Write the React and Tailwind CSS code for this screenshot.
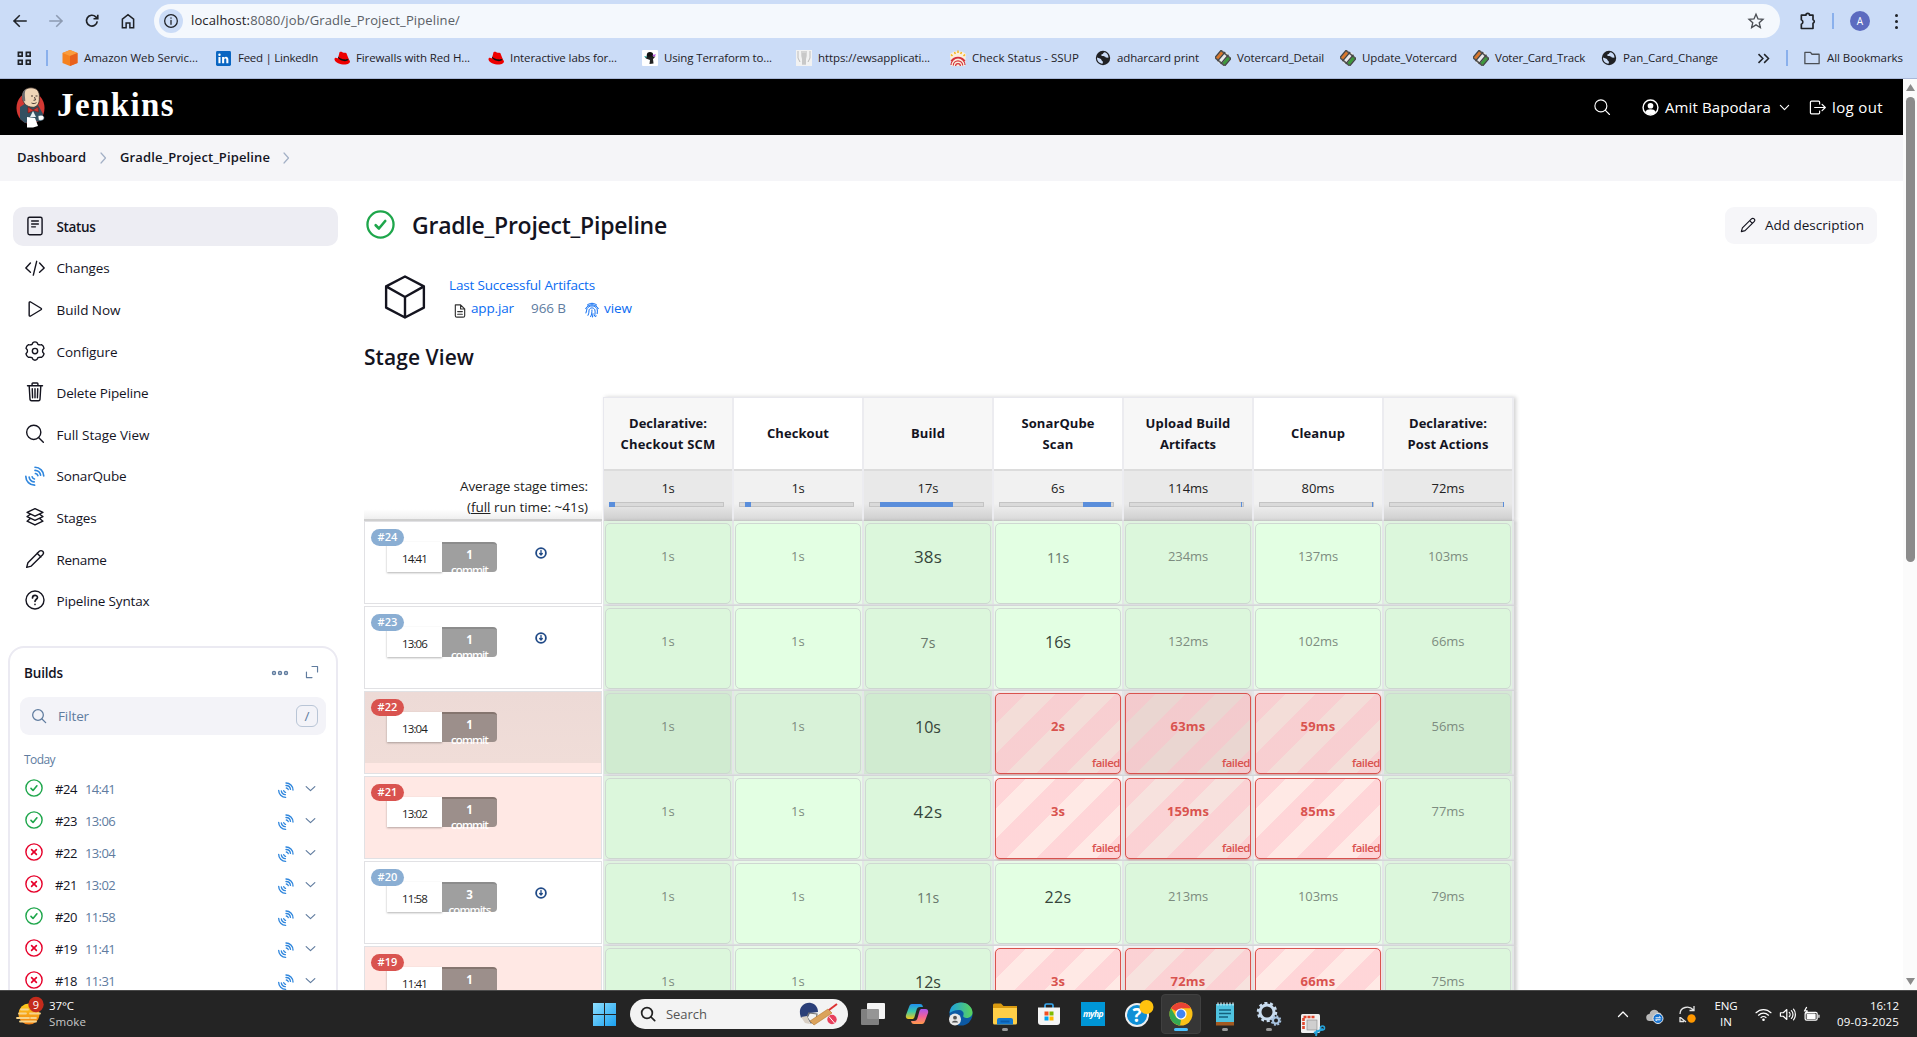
import React, { useLayoutEffect, useRef } from "react";

/* Inline text whose tracking is computed so that it fills a given width. */
function Fit({ w, className = "", children }) {
  const ref = useRef(null);
  useLayoutEffect(() => {
    const el = ref.current;
    el.style.letterSpacing = "0px";
    const natural = el.getBoundingClientRect().width;
    const n = el.textContent.length;
    el.style.letterSpacing = (w - natural) / n + "px";
  }, [w, children]);
  return (
    <span ref={ref} className={"inline-block whitespace-nowrap " + className}>
      {children}
    </span>
  );
}

function Svg({ s = 20, vb = 24, className = "", sw = 1.6, children }) {
  return (
    <svg
      width={s}
      height={s}
      viewBox={`0 0 ${vb} ${vb}`}
      fill="none"
      stroke="currentColor"
      strokeWidth={sw}
      strokeLinecap="round"
      strokeLinejoin="round"
      className={"shrink-0 " + className}
    >
      {children}
    </svg>
  );
}

const Sonar = ({ s = 20 }) => (
  <Svg s={s} sw={2} className="text-[#2f86dd]">
    <path d="M12 1.5A10.5 10.5 0 0 1 22.5 12M12 5.3A6.7 6.7 0 0 1 18.7 11M12.500 9A3.500 3.500 0 0 1 15.400 11.500" />
    <path d="M1 12.500A10.500 10.500 0 0 0 11.500 23M5 13.300A6.700 6.700 0 0 0 11 19M8.600 13A3.500 3.500 0 0 0 11.300 15.600" />
  </Svg>
);
const Search = ({ s, sw, className }) => (
  <Svg s={s} sw={sw} className={className}>
    <circle cx="10.5" cy="10.5" r="8" />
    <path d="M16.500 16.500L22 22" />
  </Svg>
);
const Pencil = ({ s, sw }) => (
  <Svg s={s} sw={sw}>
    <path d="M2 22l1.600-5.600L17.200 2.800a2.600 2.600 0 0 1 4 4L7.600 20.400 2 22zM14.500 5.500l4 4" />
  </Svg>
);
const Status = ({ ok, s }) => (
  <Svg s={s} sw={2.2} className={ok ? "text-[#1ea64b]" : "text-[#e6002a]"}>
    <circle cx="12" cy="12" r="10.8" strokeWidth={1.9} />
    {ok ? <path d="M8 12.600l2.700 2.700 5.200-6.200" /> : <path d="M8.800 8.800l6.400 6.400M15.200 8.800l-6.400 6.400" />}
  </Svg>
);

/* ---------- Browser chrome ---------- */
const Hat = () => (
  <svg width="16" height="16" viewBox="0 0 16 16" className="shrink-0">
    <path d="M1 8c-2 2 2 6 8 6.500 5 .3 7-1.500 7-3-.2-1.200-1.300-1.800-1.600-3.200L12.500 3.500C12 2.300 10.500 3 9.500 2.700 8.500 2.200 7 1 5.500 2.200L4 8.200C3 8.500 2 7.500 1 8z" fill="#e00" />
    <path d="M4 7.800c1.500 3 8 4.500 10.200 2.300l.3-1.600c-2 2-9 .5-10.200-2z" fill="#111" />
  </svg>
);
const Globe = () => (
  <svg width="16" height="16" viewBox="0 0 16 16" className="shrink-0">
    <circle cx="8" cy="8" r="7.200" fill="#202124" />
    <path d="M9.500 2.200c-1.500.3-1 1.800-2.500 2-1.200.2-.8 1.600.2 1.700 2 .1 3 .4 3.600 1.600l2.600.2c.4-2.500-1.500-4.900-3.900-5.500zM2 7.500c2 .8 4 1 4.500 2.400.4 1.300 1.500 1 1.500 2.200l-.5 1.700C4 13.500 1.800 10.500 2 7.500z" fill="#cbdcf7" />
  </svg>
);
const Voter = () => (
  <svg width="16" height="16" viewBox="0 0 16 16" className="shrink-0">
    <g transform="rotate(40 8 8)">
      <rect x="2" y="3" width="3.400" height="10" fill="#d9772c" />
      <rect x="6.300" y="1.500" width="3.400" height="13" fill="#e8e8e8" />
      <rect x="10.600" y="3" width="3.400" height="10" fill="#3e9a3c" />
      <path d="M1.500 3.500h13M2 13h12" stroke="#555" strokeWidth="1.600" />
      <path d="M1.600 3v10M5.800 2v12M10.100 2v12M14.400 3v10" stroke="#444" strokeWidth="1.300" />
    </g>
  </svg>
);
const Aws = () => (
  <svg width="16" height="16" viewBox="0 0 16 16" className="shrink-0">
    <path d="M8 0l7.500 3v10L8 16 .5 13V3z" fill="#f58220" />
    <path d="M8 0l7.500 3L8 6 .5 3z" fill="#fa9c3c" />
    <path d="M8 6l7.500-3v10L8 16z" fill="#e8601c" />
  </svg>
);
const LinkedIn = () => (
  <svg width="15" height="15" viewBox="0 0 16 16" className="shrink-0">
    <rect width="16" height="16" rx="1.500" fill="#0a66c2" />
    <path d="M2.600 6.300h2.200V13H2.600zM6.500 6.300h2.100v1c1.300-1.900 4.600-1.500 4.600 1.700v4h-2.200V9.500c0-2-2.300-1.700-2.300 0V13H6.500z" fill="#fff" />
    <circle cx="3.700" cy="3.900" r="1.300" fill="#fff" />
  </svg>
);
const Terra = () => (
  <svg width="16" height="16" viewBox="0 0 16 16" className="shrink-0">
    <rect width="16" height="16" rx="1" fill="#fff" />
    <circle cx="8" cy="5.300" r="3.200" fill="#111" />
    <path d="M2.500 6.500h11L11 9l.5 4.500-4 .5.500-4L4 8.500z" fill="#222" />
    <path d="M10 5l4-.7-1.500 2.500z" fill="#b44be0" />
    <path d="M2 6l3 .5-1 1.500z" fill="#42c8c0" />
  </svg>
);
const Emblem = () => (
  <svg width="16" height="16" viewBox="0 0 16 16" className="shrink-0">
    <rect width="16" height="16" fill="#f2f2f2" />
    <path d="M5 1h6v5l-1 3v6H6V9L5 6z" fill="#d4d4d4" />
    <path d="M2 1v7l2 4M14 1v7l-2 4M7 3v11M9 3v11" stroke="#bcbcbc" fill="none" />
  </svg>
);
const Aadhaar = () => (
  <svg width="16" height="16" viewBox="0 0 16 16" className="shrink-0" fill="none">
    <path d="M0 4l1 12h14l1-12-3-2-5-1-5 1z" fill="#fbeedd" />
    <path d="M1 15a7 7 0 0 1 14 0M3.300 15.500a4.700 4.700 0 0 1 9.400 0M5.600 16a2.400 2.400 0 0 1 4.800 0M1 11a8.500 8.500 0 0 1 14 0" stroke="#d3323c" strokeWidth="1.200" />
    <path d="M1 4.500l1.500 1.500M4.500 2l.8 2M8 .5V3M11.500 2l-.8 2M15 4.500L13.500 6" stroke="#f3b61f" strokeWidth="1.500" />
  </svg>
);

const bookmarks = [
  [Aws, "Amazon Web Servic...", 114, "w-[154px]"],
  [LinkedIn, "Feed | LinkedIn", 80, "w-[118px]"],
  [Hat, "Firewalls with Red H...", 114, "w-[154px]"],
  [Hat, "Interactive labs for...", 107, "w-[154px]"],
  [Terra, "Using Terraform to...", 108, "w-[154px]"],
  [Emblem, "https://ewsapplicati...", 112, "w-[154px]"],
  [Aadhaar, "Check Status - SSUP", 107, "w-[145px]"],
  [Globe, "adharcard print", 82, "w-[120px]"],
  [Voter, "Votercard_Detail", 87, "w-[125px]"],
  [Voter, "Update_Votercard", 95, "w-[133px]"],
  [Voter, "Voter_Card_Track", 90, "w-[128px]"],
  [Globe, "Pan_Card_Change", 95, "w-[154px]"],
];

function Browser() {
  return (
    <div className="flex h-[79px] flex-col border-b border-[#a9b8d8] bg-[#cbdcf7] text-[#1f2227]">
      <div className="flex h-[42px] items-center pl-[11px]">
        <Svg s={18} sw={2} className="mr-[18px]"><path d="M20 12H4M11 5l-7 7 7 7" strokeLinecap="square" strokeLinejoin="miter" /></Svg>
        <Svg s={18} sw={2} className="mr-[18px] text-[#8d9bb2]"><path d="M4 12h16M13 5l7 7-7 7" strokeLinecap="square" strokeLinejoin="miter" /></Svg>
        <Svg s={18} sw={2.200} className="mr-[18px]"><path d="M19 12.500a7.200 7.200 0 1 1-2-6L19.500 9M19.700 3.500V9H14" strokeLinecap="butt" strokeLinejoin="miter" /></Svg>
        <Svg s={18} sw={2} className="mr-[17px]"><path d="M4.500 21V9.500L12 3.500l7.500 6V21h-5v-6.500h-5V21z" strokeLinejoin="miter" /></Svg>
        <div className="flex h-[34px] w-[1626px] items-center rounded-full bg-[#f4f8fd] pl-[5px] pr-[15px]">
          <div className="flex size-6 items-center justify-center rounded-full bg-[#cbdcf7]">
            <Svg s={16} sw={1.900}><circle cx="12" cy="12" r="9.500" /><path d="M12 11v6M12 7.300v.4" /></Svg>
          </div>
          <div className="ml-[8px] text-[13px] text-[#5a5f66]">
            <Fit w={269}><span className="text-[#1f2227]">localhost:</span>8080/job/Gradle_Project_Pipeline/</Fit>
          </div>
          <Svg s={18} sw={1.800} className="ml-auto text-[#4b4f55]"><path d="M12 3l2.700 6.200 6.600.6-5 4.400 1.500 6.500L12 17.200l-5.800 3.500 1.500-6.500-5-4.400 6.600-.6z" strokeLinejoin="miter" /></Svg>
        </div>
        <Svg s={20} sw={2} className="ml-[18px]"><path d="M4 5h5.500a2.200 2.200 0 0 1 4.400 0H18v5.500a2.200 2.200 0 0 1 0 4.200V21H4v-5a3 3 0 0 0 0-5.500z" /></Svg>
        <div className="ml-[14px] h-4 w-[2px] bg-[#8ab0ec]" />
        <div className="ml-[16px] flex size-5 items-center justify-center rounded-full bg-[#5c6bc0] text-[10px] text-white">A</div>
        <div className="ml-[25px] flex flex-col gap-[3px]">
          <i className="size-[3px] rounded-full bg-[#1f2227]" />
          <i className="size-[3px] rounded-full bg-[#1f2227]" />
          <i className="size-[3px] rounded-full bg-[#1f2227]" />
        </div>
      </div>
      <div className="flex h-8 items-center pl-[17px] text-[11.500px]">
        <Svg s={15} vb={16} sw={1.800} className="mr-[14px]"><path d="M1.500 1.500h4v4h-4zM10 1.500h4v4h-4zM1.500 10h4v4h-4zM10 10h4v4h-4z" strokeLinejoin="miter" /></Svg>
        <div className="mr-[14px] h-4 w-[2px] bg-[#8ab0ec]" />
        {bookmarks.map(([Icon, label, w, cw]) => (
          <div key={label} className={"flex shrink-0 items-center gap-[6px] " + cw}>
            <div className="w-4"><Icon /></div>
            <Fit w={w}>{label}</Fit>
          </div>
        ))}
        <Svg s={15} sw={2.400} className="ml-px"><path d="M4 5l7 7-7 7M13 5l7 7-7 7" strokeLinecap="butt" strokeLinejoin="miter" /></Svg>
        <div className="ml-[15px] h-4 w-[2px] bg-[#8ab0ec]" />
        <Svg s={18} sw={1.700} className="ml-[15px] mr-[6px] text-[#4b4f55]"><path d="M2.500 4.500H10l2 2.500h9.500v12.500h-19z" /></Svg>
        <Fit w={76}>All Bookmarks</Fit>
      </div>
    </div>
  );
}

/* ---------- Jenkins ---------- */
const Butler = () => (
  <svg width="30" height="41" viewBox="0 0 30 41" className="shrink-0">
    <ellipse cx="14.500" cy="21" rx="14" ry="16" fill="#d33833" />
    <path d="M4 20l6-4 12 2 5 9-2 7-16 2-5-4z" fill="#335061" />
    <path d="M6.500 11C6 5 9 .8 15 .8c6 0 9 4 8.300 10 .3 5-1.500 9-6 9.500C10 20 7 16 6.500 11z" fill="#f0d6b7" stroke="#3b2f2a" strokeWidth=".8" />
    <path d="M6.300 12c-1-5 1-9 4-10.300-2 3-1.500 6-1.300 8.500l.3 4c-1.500.3-2.500-.2-3-2.200z" fill="#6d6b6d" />
    <path d="M15 9h2M19.500 9h2M18.500 10l1 3-2 .3M15.500 16c2 1 3.500.6 5-.4" stroke="#3b2f2a" strokeWidth=".9" fill="none" />
    <path d="M12 20l5 3 5-3 .5 5-5-1.500L12 26z" fill="#d33833" stroke="#7c1715" strokeWidth=".6" />
    <path d="M17 24l-3 6h6z" fill="#e8eef2" />
    <path d="M11 30l8 1 3 8-5 1.500h-6z" fill="#fff" />
    <path d="M22 29c3-1.500 5.500-1 6 1.500s-3 3.500-5.500 2.500z" fill="#fff" stroke="#335061" strokeWidth=".6" />
  </svg>
);

function Header() {
  return (
    <div className="flex h-14 items-center bg-black pl-4 pr-5 text-white">
      <Butler />
      <div className="ml-[11px] -mt-1 font-['Liberation_Serif',serif] text-[33px] leading-none font-bold">
        <Fit w={118}>Jenkins</Fit>
      </div>
      <Search s={18} sw={1.500} className="ml-auto mr-[31px]" />
      <svg width="17" height="17" viewBox="0 0 24 24" className="mr-[6px]">
        <circle cx="12" cy="12" r="10.500" fill="none" stroke="#fff" strokeWidth="2" />
        <circle cx="12" cy="9.500" r="4" fill="#fff" />
        <path d="M4.500 18.500c1.500-3 4-4 7.500-4s6 1 7.500 4C17.500 21 15 22 12 22s-5.500-1-7.500-3.500z" fill="#fff" />
      </svg>
      <div className="text-[15px] font-medium"><Fit w={106}>Amit Bapodara</Fit></div>
      <Svg s={11} sw={2.600} className="ml-[8px] mr-[19px]"><path d="M3 7.500l9 9 9-9" /></Svg>
      <Svg s={17} sw={1.700} className="mr-[6px]"><path d="M15 7V4.500A1.500 1.500 0 0 0 13.500 3h-10A1.500 1.500 0 0 0 2 4.500v15A1.500 1.500 0 0 0 3.500 21h10a1.500 1.500 0 0 0 1.500-1.500V17M8 12h14.500M18.500 7.500L23 12l-4.500 4.500" /></Svg>
      <div className="text-[15px] font-medium"><Fit w={51}>log out</Fit></div>
    </div>
  );
}

const Crumb = () => (
  <Svg s={12} sw={2.400} className="text-[#a3b0c6]"><path d="M8 2l9 10-9 10" /></Svg>
);

const tasks = [
  ["Status", 39, <g key="a"><rect x="3.500" y="1.500" width="17" height="21" rx="2" /><path d="M8 6h8M8 9.500h8M8 13h4.500" /></g>],
  ["Changes", 53, <path key="b" d="M6.500 6L1 12l5.500 5M17.500 6L23 12l-5.500 5M14 4l-4 16.500" />],
  ["Build Now", 64, <path key="c" d="M5 4.500v15c0 1 1 1.300 1.800.9l12.400-7.500c.8-.5.8-1.300 0-1.800L6.800 3.600C6 3.200 5 3.500 5 4.500z" />],
  ["Configure", 61, <g key="d"><path d="M12 1c2 0 3 .7 3.500 3 1.800.9 2.300 1 4.300.4 2 1 2.800 2.600 3 4.300-1.600 1.600-2 2.200-1.800 3.300-.2 1.200.2 1.800 1.800 3.400-.3 1.800-1.200 3.300-3 4.200-2-.5-2.500-.4-4.300.4-.6 2.200-1.500 3-3.500 3s-3-.8-3.500-3c-1.800-.8-2.300-.9-4.300-.4-1.800-.9-2.700-2.400-3-4.200C2.800 13.800 3.200 13.200 3 12c.2-1.100-.2-1.700-1.800-3.300.2-1.700 1-3.300 3-4.300 2 .6 2.500.5 4.300-.4C9 1.700 10 1 12 1z" /><circle cx="12" cy="12" r="3.200" /></g>],
  ["Delete Pipeline", 92, <path key="e" d="M3 4.500h18M8.500 4.500V2.200c0-.6.400-1 1-1h5c.6 0 1 .4 1 1v2.300M5 4.500l1 16.300c.1 1 .8 1.700 1.800 1.700h8.400c1 0 1.700-.7 1.800-1.700l1-16.300M8.700 8l.4 11M12 8v11M15.300 8l-.4 11" />],
  ["Full Stage View", 93, <g key="f"><circle cx="10.500" cy="10" r="8.500" /><path d="M16.500 16.500L22 22" /></g>],
  ["SonarQube", 70, null],
  ["Stages", 40, <path key="g" d="M12 2l9.500 4.500L12 11 2.500 6.500zM6 9l-3.500 2.500L12 16l9.500-4.500L18 9M6 14l-3.500 3L12 21.500l9.500-4.500-3.500-3" />],
  ["Rename", 50, <path key="h" d="M2 22l1.500-5.500L17.200 2.800a2.600 2.600 0 0 1 4 4L7.500 20.500 2 22zM14.500 5l4.500 4.500" />],
  ["Pipeline Syntax", 93, <g key="i"><circle cx="12" cy="12" r="10.800" /><path d="M9 9.500c0-4 6-3.800 6-.5 0 2-3 2.300-3 4.800M12 17.300v.2" strokeWidth="2" /></g>],
];

const builds = [
  [24, "14:41", true], [23, "13:06", true], [22, "13:04", false], [21, "13:02", false],
  [20, "11:58", true], [19, "11:41", false], [18, "11:31", false],
];

function Sidebar() {
  return (
    <div className="flex w-[364px] shrink-0 flex-col pt-[26px] text-[13.500px] text-[#14141f]">
      <div className="flex flex-col gap-[2.600px] pl-[13px]">
        {tasks.map(([label, w, icon], i) => (
          <div key={label} className={"flex h-[39px] w-[325px] shrink-0 items-center gap-[11.500px] rounded-[10px] pl-[12px] " + (i === 0 ? "bg-[#ededf3] font-semibold" : "")}>
            {icon ? <Svg s={20} sw={1.700} className="-mt-px">{icon}</Svg> : <Sonar s={20} />}
            <Fit w={w} className="mt-px">{label}</Fit>
          </div>
        ))}
      </div>
      <div className="ml-2 mt-[26px] flex h-[460px] w-[330px] shrink-0 flex-col rounded-[16px] border-2 border-[#ebeaf2] px-[10px]">
        <div className="flex h-[49px] items-center pl-[4px] pr-[7px]">
          <Fit w={39} className="font-semibold">Builds</Fit>
          <Svg s={18} sw={1.900} className="ml-auto mr-[16px] text-[#607c9f]"><circle cx="4" cy="12" r="2" /><circle cx="12" cy="12" r="2" /><circle cx="20" cy="12" r="2" /></Svg>
          <Svg s={14} sw={2} className="mb-px text-[#607c9f]"><path d="M12 2.500h9.500V12M2.500 12v9.500H12" /></Svg>
        </div>
        <div className="flex h-[38px] items-center rounded-[9px] bg-[#f3f3f8] pl-[11px] pr-2 text-[#607c9f]">
          <Search s={16} sw={1.900} />
          <Fit w={31} className="ml-[11px]">Filter</Fit>
          <div className="ml-auto flex size-[22px] items-center justify-center rounded-[6px] border border-[#b9c5d6]">/</div>
        </div>
        <div className="mt-[16px] h-[21px] pl-1 text-[12px] text-[#607c9f]"><Fit w={31}>Today</Fit></div>
        {builds.map(([n, t, ok]) => (
          <div key={n} className="flex h-8 shrink-0 items-center pl-[5px] pr-[9px]">
            <Status ok={ok} s={18} />
            <Fit w={22} className="ml-[12px] mt-[3px] text-[13px]">#{n}</Fit>
            <Fit w={30} className="ml-2 mt-[3px] text-[13px] text-[#607c9f]">{t}</Fit>
            <span className="ml-auto mr-[10px] mt-[3px]"><Sonar s={16} /></span>
            <Svg s={13} sw={2.200} className="text-[#607c9f]"><path d="M4 8.500l8 7.500 8-7.500" /></Svg>
          </div>
        ))}
      </div>
    </div>
  );
}

const stages = [
  { n: ["Declarative:", "Checkout SCM"], w: [78, 95], t: "1s", tw: 13, l: 0, b: 6 },
  { n: ["Checkout"], w: [62], t: "1s", tw: 13, l: 6, b: 6 },
  { n: ["Build"], w: [34], t: "17s", tw: 21, l: 11, b: 73 },
  { n: ["SonarQube", "Scan"], w: [73, 31], t: "6s", tw: 14, l: 84, b: 28 },
  { n: ["Upload Build", "Artifacts"], w: [85, 56], t: "114ms", tw: 40, l: 112, b: 1.5 },
  { n: ["Cleanup"], w: [54], t: "80ms", tw: 33, l: 113, b: 1.5 },
  { n: ["Declarative:", "Post Actions"], w: [78, 81], t: "72ms", tw: 33, l: 114, b: 1.5 },
];

/* Each run: number, time, commits, ok, then one duration per stage. */
const runs = [
  { n: 24, t: "14:41", c: 1, ok: true, d: ["1s", "1s", "38s", "11s", "234ms", "137ms", "103ms"] },
  { n: 23, t: "13:06", c: 1, ok: true, d: ["1s", "1s", "7s", "16s", "132ms", "102ms", "66ms"] },
  { n: 22, t: "13:04", c: 1, ok: false, hover: true, d: ["1s", "1s", "10s", "2s", "63ms", "59ms", "56ms"] },
  { n: 21, t: "13:02", c: 1, ok: false, d: ["1s", "1s", "42s", "3s", "159ms", "85ms", "77ms"] },
  { n: 20, t: "11:58", c: 3, ok: true, d: ["1s", "1s", "11s", "22s", "213ms", "103ms", "79ms"] },
  { n: 19, t: "11:41", c: 1, ok: false, d: ["1s", "1s", "12s", "3s", "72ms", "66ms", "75ms"] },
];

const big = {
  "38s": [17, 28], "16s": [16, 26], "42s": [17, 29], "22s": [16, 27], "10s": [16, 26], "12s": [16, 26],
  "11s": [14, 22], "7s": [14, 15],
};

function Cell({ v, i, failed, hover }) {
  const odd = i % 2 === 0;
  const [fs, fw] = big[v] || [13, v.length === 2 ? 14 : v.length === 5 ? 40 : 33];
  let bg = odd ? "bg-[#dcf7dc]" : "bg-[#e3ffe3]";
  let outer = odd ? "bg-[#e0f3e0]" : "bg-[#e8fae8]";
  if (hover) {
    bg = odd ? "bg-[#d0ebd0]" : "bg-[#d8f2d8]";
    outer = odd ? "bg-[#d5e8d5]" : "bg-[#dff0df]";
  }
  if (failed) {
    outer = odd ? "bg-[#f1f1f1]" : "bg-[#fbf9f9]";
    bg = odd ? "bg-[#f7e2de]" : "bg-[#ffe9e5]";
    if (hover) {
      outer = odd ? "bg-[#e6e2e2]" : "bg-[#f1eeee]";
      bg = odd ? "bg-[#ead6d1]" : "bg-[#f3ddd8]";
    }
  }
  const stripes = failed
    ? " bg-[linear-gradient(135deg,rgba(255,190,200,0.45)_25%,transparent_25%,transparent_50%,rgba(255,190,200,0.45)_50%,rgba(255,190,200,0.45)_75%,transparent_75%,transparent)] bg-[length:60px_60px] border-[#d9534f] shadow-[0_1px_2px_rgba(217,83,79,0.5)]"
    : " border-[#cfd8d2]";
  const tone = failed
    ? "font-bold text-[#d9534f]"
    : fs >= 16 ? "text-[#36453a]" : fs === 14 ? "text-[#69786c]" : "text-[#7d8c80]";
  return (
    <div className={"flex w-[130px] shrink-0 border-b-2 border-r-2 border-[#e4e6e8] px-px pt-[2px] " + outer}>
      <div className={"flex h-[81px] w-full flex-col rounded-[5px] border " + bg + stripes}>
        <div className={"flex h-[66px] items-center justify-center " + tone}>
          <span style={{ fontSize: failed ? 13 : fs }}><Fit w={failed && v.length > 3 ? fw + 2 : fw}>{v}</Fit></span>
        </div>
        {failed && (
          <div className="-mt-[5px] text-right text-[11.500px] leading-4 font-semibold text-[#d9534f]">
            <Fit w={28}>failed</Fit>
          </div>
        )}
      </div>
    </div>
  );
}

function RunHead({ r }) {
  const bad = !r.ok;
  const fill = !bad
    ? "bg-white"
    : r.hover
      ? "bg-[linear-gradient(#eddad6_0,#f0ddd8_71px,#ffe8e4_71px)]"
      : "bg-[#ffe8e4]";
  return (
    <div className={"mb-[2px] mr-px flex h-[83px] w-[238px] shrink-0 border border-[#e1e1e4] " + fill}>
      <div className="relative ml-[22px] mt-[20px] flex h-[30px] w-[110px]">
        <div className="flex h-[30px] w-[55px] items-center justify-center bg-white pt-[4px] text-[11.500px] text-[#222] shadow-[0_1px_2px_rgba(0,0,0,0.3)]">
          <Fit w={25}>{r.t}</Fit>
        </div>
        <div className={"flex h-[30px] w-[55px] flex-col items-center rounded-r-[4px] border-t-2 pt-[2px] text-[11.500px] leading-[17px] text-white " + (bad ? "border-[#85756f] bg-[#9c8f8b]" : "overflow-hidden border-[#8c8c8c] bg-[#9f9f9f]")}>
          <b>{r.c}</b>
          <Fit w={r.c > 1 ? 42 : 37} className="-mt-[2px] font-semibold">{r.c > 1 ? "commits" : "commit"}</Fit>
        </div>
        <div className={"absolute -left-4 -top-[13px] flex h-[17px] w-[33px] items-center justify-center rounded-full text-[11px] font-semibold text-white " + (bad ? "bg-[#d9534f]" : "bg-[#8aaed3]")}>
          <Fit w={20}>#{r.n}</Fit>
        </div>
      </div>
      {r.ok && (
        <Svg s={12} vb={12} sw={1.800} className="ml-[38px] mt-[25px] text-[#204a87]">
          <circle cx="6" cy="6" r="4.900" />
          <path d="M6 3.500v4.500M4.700 6.500L6 8l1.300-1.500" strokeWidth="1.300" />
        </Svg>
      )}
    </div>
  );
}

function StageTable() {
  return (
    <div className="mt-[31px] flex w-[1152px] shrink-0 flex-col">
      <div className="flex h-[124px] shrink-0">
        <div className="mr-px flex w-[238px] flex-col items-end justify-end border-b-2 border-[#cfcfcf] bg-[linear-gradient(transparent_92%,#efefef)] pb-px pr-[14px] text-[13.500px] leading-[21px] text-[#222]">
          <Fit w={128}>Average stage times:</Fit>
          <Fit w={121}>(<u>full</u> run time: ~41s)</Fit>
        </div>
        <div className="flex border-l border-t border-[#e8e8ee] shadow-[2px_0_4px_rgba(0,0,0,0.18)]">
          {stages.map((s, i) => (
            <div key={i} className={"flex w-[130px] flex-col border-r-2 border-[#ececf0] " + (i % 2 ? "bg-white" : "bg-[#f7f7f7]")}>
              <div className="flex h-[71px] flex-col items-center justify-center text-[13px] leading-[21px] font-bold text-[#14141f]">
                {s.n.map((x, k) => <Fit key={x} w={s.w[k]}>{x}</Fit>)}
              </div>
              <div className={"flex flex-1 flex-col items-center border-t-2 border-[#dcdcdc] pt-[7px] text-[13px] leading-[21px] text-[#222] " + (i % 2 ? "bg-[linear-gradient(#f1f1f1_65%,#d8d8d8)]" : "bg-[linear-gradient(#e9e9e9_65%,#cdcdcd)]")}>
                <Fit w={s.tw}>{s.t}</Fit>
                <div className="mr-[4px] mt-[3px] flex h-[5px] w-[115px] shrink-0 border border-[#c4c4c4] bg-[#dadada]">
                  <div className="-my-px h-[5px] shrink-0 bg-[#5a8edb]" style={{ marginLeft: s.l - 1, width: s.b }} />
                </div>
              </div>
            </div>
          ))}
        </div>
      </div>
      {runs.map((r) => (
        <div key={r.n} className="flex h-[85px] shrink-0">
          <RunHead r={r} />
          <div className="flex border-l border-[#e4e6e8] shadow-[3px_0_3px_rgba(0,0,0,0.18)]">
            {r.d.map((v, i) => (
              <Cell key={i} v={v} i={i} hover={r.hover} failed={!r.ok && i > 2 && i < 6} />
            ))}
          </div>
        </div>
      ))}
    </div>
  );
}

function Main() {
  return (
    <div className="flex flex-1 flex-col text-[#14141f]">
      <div className="flex h-[88px] shrink-0 items-center pr-[26px]">
        <span className="-mt-[2px] ml-[2px]"><Status ok s={29} /></span>
        <Fit w={255} className="ml-[17px] text-[23px] font-semibold">Gradle_Project_Pipeline</Fit>
        <div className="ml-auto flex h-[37px] w-[152px] items-center gap-[9px] rounded-[9px] bg-[#f6f6f9] pl-[15px] text-[13.500px]">
          <Pencil s={16} sw={1.700} />
          <Fit w={99}>Add description</Fit>
        </div>
      </div>
      <div className="flex h-[56px] shrink-0 items-center pl-[19px]">
        <Svg s={44} sw={1.300} className="mr-[22px]"><path d="M12 .8l10.300 5.400v11.600L12 23.200 1.700 17.800V6.200zM1.700 6.200L12 12l10.300-5.800M12 12v11.200" /></Svg>
        <div className="flex flex-col items-start text-[13.500px] text-[#0b6cf2]">
          <Fit w={146} className="leading-[23px]">Last Successful Artifacts</Fit>
          <div className="flex h-[23px] items-center">
            <Svg s={14} sw={2} className="ml-1 mr-1 mt-[5px] text-[#333]"><path d="M4 1.500h9l7 7V20a2.500 2.500 0 0 1-2.500 2.500h-11A2.500 2.500 0 0 1 4 20zM13 1.500v7h7M8 13h8M8 17.500h8" /></Svg>
            <Fit w={43}>app.jar</Fit>
            <Fit w={35} className="ml-[17px] text-[#607c9f]">966 B</Fit>
            <Svg s={16} sw={1.500} className="ml-[18px] mr-[4px] mt-[2px]">
              <path d="M5 4.500c4-3.500 10-3.500 14 0M2.500 10c3-8 16-8 19 0M3 16.500c1-2 .5-4.500 1.500-6.500 3-5.500 12-5.500 15 0 .8 2 .8 5 .3 7.500M6 20c2-3.500 1-6 1.800-8.500 1.700-3.500 6.700-3.500 8.400 0 .8 3 .6 6.500-.5 9.500M10 22c2-4 1.800-7 1.900-10M13.500 17.500l-.7 5M18 20.500l-.5 1.500" />
            </Svg>
            <Fit w={28}>view</Fit>
          </div>
        </div>
      </div>
      <div className="mt-[25px] flex h-4 shrink-0 items-center text-[21px] font-semibold"><Fit w={110}>Stage View</Fit></div>
      <StageTable />
    </div>
  );
}

/* ---------- Taskbar ---------- */
const Slot = ({ children, active, dot }) => (
  <div className={"flex h-[40px] w-[40px] shrink-0 flex-col items-center justify-center rounded-[4px] " + (active ? "border border-[#404040] bg-[#363636]" : "")}>
    <div className="mt-[3px] flex h-[28px] items-center">{children}</div>
    <div className={"h-[3px] rounded-full " + (active ? "w-[14px] bg-[#4cc2ff]" : dot ? "w-[6px] bg-[#9a9a9a]" : "w-0")} />
  </div>
);

function Taskbar() {
  return (
    <div className="flex h-[47px] items-center border-t border-[#4a4a4a] bg-[#242424] text-[11.500px] leading-[16px] text-white">
      <div className="flex w-[593px] items-center pl-[16px]">
        <svg width="28" height="30" viewBox="0 0 28 30" className="-mt-[6px] mr-[5px]">
          <defs><linearGradient id="sun" x1="0" y1="0" x2="0" y2="1"><stop offset="0" stopColor="#ffcf1b" /><stop offset="1" stopColor="#f07c12" /></linearGradient></defs>
          <circle cx="13" cy="18" r="10.500" fill="url(#sun)" />
          <path d="M5 13.500h7M14 17.500h10M3 17.500h7M1 22h12M15 22h5M4 25.500h16" stroke="#f6d48c" strokeWidth="1.800" strokeLinecap="round" />
          <circle cx="20" cy="8.500" r="7.700" fill="#c42b1c" />
          <text x="20" y="12.500" textAnchor="middle" fontSize="11" fill="#fff" stroke="none">9</text>
        </svg>
        <div className="flex flex-col items-start">
          <Fit w={25}>37°C</Fit>
          <Fit w={37} className="text-[#c8c8c8]">Smoke</Fit>
        </div>
      </div>
      <svg width="23" height="23" viewBox="0 0 23 23">
        <defs><linearGradient id="win" x1="0" y1="0" x2="1" y2="1"><stop offset="0" stopColor="#8fe0ff" /><stop offset="1" stopColor="#1aa0f0" /></linearGradient></defs>
        <path d="M0 0h11v11H0zM12 0h11v11H12zM0 12h11v11H0zM12 12h11v11H12z" fill="url(#win)" />
      </svg>
      <div className="ml-[14px] flex h-[30px] w-[218px] items-center rounded-full bg-[#f3f3f3] pl-[10px] pr-[9px] text-[#555]">
        <Search s={16} sw={2.600} className="text-[#222]" />
        <Fit w={41} className="ml-[10px] text-[13px]">Search</Fit>
        <svg width="40" height="24" viewBox="0 0 40 24" className="ml-auto">
          <path d="M1 12C0 4 6 0 12 1c5 1 7 5 7 9l-8 1-2 4-7 1z" fill="#2b3f78" />
          <path d="M10 11l8 1-1 7-5 2-4-6z" fill="none" stroke="#777" strokeWidth="1.200" />
          <path d="M2 15l6-1 3 8-5-1z" fill="#d8cfc4" />
          <path d="M11 19L29 7l4 4-18 12z" fill="#dba35c" stroke="#b5762c" strokeWidth=".6" />
          <path d="M30 8l8-6" stroke="#d33" strokeWidth="2" />
          <circle cx="33" cy="17.500" r="4.700" fill="#e8405c" />
          <path d="M30 14.500l5.500 6.500" stroke="#fff" />
        </svg>
      </div>
      <div className="ml-[5px] flex gap-[4px]">
        <Slot>
          <svg width="24" height="22" viewBox="0 0 24 22"><rect x="6" y="0" width="18" height="16" rx="1" fill="#f4f4f4" /><rect x="0" y="6" width="18" height="16" rx="1" fill="#8b8b8b" opacity=".9" /></svg>
        </Slot>
        <Slot>
          <svg width="24" height="22" viewBox="0 0 24 22">
            <defs>
              <linearGradient id="c1" x1="0" y1="0" x2="0" y2="1"><stop offset="0" stopColor="#1f8ff0" /><stop offset=".5" stopColor="#3cc8a8" /><stop offset="1" stopColor="#f5c518" /></linearGradient>
              <linearGradient id="c2" x1="0" y1="0" x2="0" y2="1"><stop offset="0" stopColor="#a856f0" /><stop offset=".5" stopColor="#f0609a" /><stop offset="1" stopColor="#ff9a4a" /></linearGradient>
            </defs>
            <path d="M7 1h8c2 0 2.500 1 3 3h-3c-2 0-3 1-3.500 3L9.500 14c-.5 1.500-1.200 2-2.500 2H3.500C1 16 .5 14 1 12L4 4c.6-2 1.500-3 3-3z" fill="url(#c1)" />
            <path d="M17 21H9c-2 0-2.500-1-3-3h3c2 0 3-1 3.500-3l2-7c.5-1.500 1.200-2 2.500-2h3.500c2.500 0 3 2 2.500 4l-3 8c-.6 2-1.500 3-3 3z" fill="url(#c2)" />
          </svg>
        </Slot>
        <Slot>
          <svg width="24" height="24" viewBox="0 0 24 24">
            <defs><linearGradient id="ed" x1="0" y1="0" x2="1" y2="0"><stop offset="0" stopColor="#1c9fe0" /><stop offset="1" stopColor="#5bd35a" /></linearGradient></defs>
            <circle cx="12" cy="12" r="11.500" fill="#0c59a4" />
            <path d="M.6 11C1 4 6 .5 12 .5c7 0 11.500 5 11.500 10 0 4-3.500 5.500-6 5.500-3 0-4-1.500-3-3 .8-3-1.500-5-5-5-4 0-7 1.500-8.900 3z" fill="url(#ed)" />
            <circle cx="6" cy="17.500" r="6" fill="#e8e8e8" /><circle cx="6" cy="15.700" r="1.900" fill="#555" /><path d="M2.800 20.500c.5-2.500 5.900-2.500 6.400 0z" fill="#555" />
          </svg>
        </Slot>
        <Slot dot>
          <svg width="24" height="22" viewBox="0 0 24 22"><path d="M0 2a1.500 1.500 0 0 1 1.500-1.500H8L10.500 3H24v6H0z" fill="#d99a10" /><path d="M0 5h24v15a1.500 1.500 0 0 1-1.500 1.500h-21A1.500 1.500 0 0 1 0 20z" fill="#ffcf48" /><path d="M4 21.500V17a2 2 0 0 1 2-2h12a2 2 0 0 1 2 2v4.500z" fill="#1278d0" /><rect x="7.500" y="17.500" width="9" height="2" fill="#0b5cab" /></svg>
        </Slot>
        <Slot>
          <svg width="24" height="24" viewBox="0 0 24 24"><path d="M8 6V3.500C8 2.500 8.500 2 9.500 2h5c1 0 1.500.5 1.500 1.500V6" fill="none" stroke="#38a8f0" strokeWidth="1.700" /><path d="M1 5.500h22V20a3 3 0 0 1-3 3H4a3 3 0 0 1-3-3z" fill="#f5f5f5" /><path d="M7.500 9.500h4v4h-4z" fill="#f25022" /><path d="M12.500 9.500h4v4h-4z" fill="#7fba00" /><path d="M7.500 14.500h4v4h-4z" fill="#00a4ef" /><path d="M12.500 14.500h4v4h-4z" fill="#ffb900" /></svg>
        </Slot>
        <Slot>
          <div className="flex h-[24px] w-[24px] items-center justify-center bg-[#0096d6] text-[8.500px] font-bold italic"><Fit w={20}>myhp</Fit></div>
        </Slot>
        <Slot>
          <svg width="30" height="28" viewBox="0 0 30 28" className="ml-[3px]"><circle cx="13" cy="15" r="11" fill="#0f8fd6" stroke="#eee" strokeWidth="2" /><text x="13" y="22" textAnchor="middle" fontSize="19" fontWeight="bold" fill="#fff">?</text><circle cx="22.500" cy="7" r="7" fill="#ffc20e" /></svg>
        </Slot>
        <Slot active>
          <svg width="24" height="24" viewBox="0 0 24 24"><circle cx="12" cy="12" r="11.500" fill="#fbc116" /><path d="M12 12L2 6.200A11.500 11.500 0 0 1 22 6.300H12z" fill="#ea4335" /><path d="M2 6.200l5 8.700L12 18l-1 5.500A11.500 11.500 0 0 1 2 6.200z" fill="#34a853" /><circle cx="12" cy="12" r="5.600" fill="#fff" /><circle cx="12" cy="12" r="4.400" fill="#4285f4" /></svg>
        </Slot>
        <Slot dot>
          <svg width="20" height="24" viewBox="0 0 20 24"><rect x="1" y="2" width="18" height="20" fill="#4fc3e0" /><rect x="1" y="20" width="18" height="3.500" fill="#a35a22" /><path d="M4 8h12M4 11.500h12M4 15h9" stroke="#14617d" strokeWidth="1.500" /><path d="M3 .5v3M6 .5v3M9 .5v3M12 .5v3M15 .5v3M18 .5v3" stroke="#d8eef5" strokeWidth="1.200" /></svg>
        </Slot>
        <Slot dot>
          <svg width="26" height="24" viewBox="0 0 26 24" fill="none"><circle cx="11" cy="10" r="7" stroke="#c9dcef" strokeWidth="3" /><circle cx="11" cy="10" r="9" stroke="#c9dcef" strokeWidth="2.500" strokeDasharray="3 2.650" /><circle cx="20" cy="18.500" r="3" stroke="#a7c3e0" strokeWidth="2" /><circle cx="20" cy="18.500" r="4.500" stroke="#a7c3e0" strokeWidth="1.600" strokeDasharray="2 1.500" /></svg>
        </Slot>
        <Slot>
          <svg width="26" height="24" viewBox="0 0 26 24" className="mt-[22px]"><rect x="1" y="1" width="19" height="19" rx="1.500" fill="#f0f0f0" /><path d="M3.500 16V4h12" fill="none" stroke="#e2492f" strokeWidth="2.600" strokeDasharray="3 1" /><rect x="7" y="7" width="10" height="10" fill="#cfcfcf" stroke="#888" strokeWidth=".6" /><path d="M14 20l9-4M16 23l1-6" stroke="#25a4dc" strokeWidth="2" /><circle cx="22.500" cy="15" r="2" fill="none" stroke="#25a4dc" strokeWidth="1.600" /></svg>
        </Slot>
      </div>
      <div className="ml-auto flex items-center pr-[18px]">
        <Svg s={12} sw={2.600} className="mr-[17px]"><path d="M3 17l9-9 9 9" /></Svg>
        <svg width="18" height="16" viewBox="0 0 18 16" className="mr-[14px] mt-1"><path d="M4 13a3.500 3.500 0 0 1-.5-7C4.500 1 11 .5 12.500 4.500 15 4.500 16 7 15.500 9l-3 4z" fill="#b9b9b9" /><circle cx="12" cy="10.500" r="5" fill="#1673d1" stroke="#e8e8e8" /><path d="M9.500 9.800h5l-1.300-1.300M14.500 11.800h-5l1.300 1.300" stroke="#fff" fill="none" /></svg>
        <svg width="19" height="19" viewBox="0 0 19 19" className="mr-[16px]" fill="none"><path d="M2 9C2 2 11 0 15.500 5M16 1v4.500h-4.500M2 12v4.500h4M2.500 12.500L8 17" stroke="#e6e6e6" strokeWidth="1.300" /><circle cx="13.500" cy="13.500" r="4.200" fill="#ff9800" /></svg>
        <div className="mr-[16px] flex w-[26px] flex-col items-center"><Fit w={23}>ENG</Fit><Fit w={12}>IN</Fit></div>
        <Svg s={17} sw={1.700} className="mr-[7px]"><path d="M1.500 9.500c6-6 15-6 21 0M5 13c4-4 10-4 14 0M8.500 16.500c2-2 5-2 7 0" /><circle cx="12" cy="19.500" r="1" fill="currentColor" /></Svg>
        <Svg s={17} sw={1.700} className="mr-[7px]"><path d="M2 9.500v5h4l5 4.500V5L6 9.500zM14.500 9c1.500 1.500 1.500 4.500 0 6M17.500 6.500c3 3 3 8 0 11M20.500 4.500c3.500 4 3.500 11 0 15" /></Svg>
        <Svg s={17} sw={1.700} className="mr-[11px]"><rect x="3" y="9" width="17" height="11" rx="2" /><rect x="6" y="11.500" width="11" height="6" fill="currentColor" /><path d="M22.500 13v3M5 2L2 7h4l-2 4" /></Svg>
        <div className="flex w-[68px] flex-col items-end"><Fit w={29}>16:12</Fit><Fit w={62}>09-03-2025</Fit></div>
      </div>
    </div>
  );
}

export default function App() {
  return (
    <div className="flex h-[1037px] w-[1917px] flex-col overflow-hidden bg-white font-['Open_Sans','Noto_Sans',sans-serif]">
      <Browser />
      <div className="flex h-[911px] overflow-hidden">
        <div className="flex w-[1903px] flex-col">
          <Header />
          <div className="flex h-[46px] shrink-0 items-center bg-[#f5f5f8] pl-[17px] text-[13px] font-semibold text-[#14141f]">
            <Fit w={69}>Dashboard</Fit>
            <span className="mx-[11px]"><Crumb /></span>
            <Fit w={150}>Gradle_Project_Pipeline</Fit>
            <span className="mx-[10px]"><Crumb /></span>
          </div>
          <div className="flex h-[809px] overflow-hidden">
            <Sidebar />
            <Main />
          </div>
        </div>
        <div className="flex w-[14px] flex-col items-center justify-between bg-[#fbfbfb] py-[5px]">
          <div className="flex flex-col items-center gap-[6px]">
            <svg width="9" height="7" viewBox="0 0 9 7"><path d="M4.500 0L9 7H0z" fill="#8b8b8b" /></svg>
            <div className="h-[465px] w-[9px] rounded-full bg-[#8b8b8b]" />
          </div>
          <svg width="9" height="7" viewBox="0 0 9 7"><path d="M4.500 7L9 0H0z" fill="#8b8b8b" /></svg>
        </div>
      </div>
      <Taskbar />
    </div>
  );
}
